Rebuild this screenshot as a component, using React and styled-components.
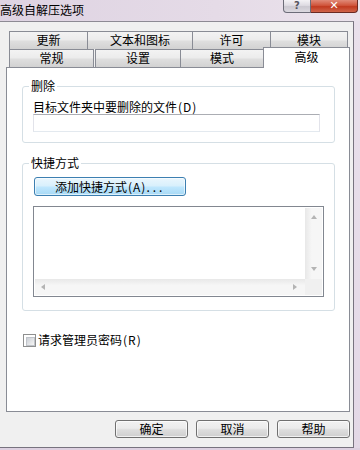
import React from 'react';
import styled, { createGlobalStyle } from 'styled-components';

const Global = createGlobalStyle`
  html, body {
    margin: 0;
    padding: 0;
    background: #e6dce8;
  }
  * {
    box-sizing: border-box;
  }
`;

const Window = styled.div`
  width: 360px;
  height: 450px;
  display: flex;
  flex-direction: column;
  font-family: "Noto Sans CJK SC", "DejaVu Sans", sans-serif;
  font-size: 12px;
  color: #000;
  background: #e6dce8;
  overflow: hidden;
`;

const TitleBar = styled.div`
  height: 21px;
  flex: 0 0 auto;
  display: flex;
  justify-content: space-between;
  align-items: flex-start;
  background: linear-gradient(90deg, #ded3e2 0%, #e5dbe7 60%, #ebe3ec 100%);
`;

const Title = styled.div`
  line-height: 20px;
  font-size: 12px;
`;

const Captions = styled.div`
  display: flex;
  margin-right: 2px;
`;

const CaptionButton = styled.div`
  height: 13px;
  width: ${p => p.$w}px;
  border: 1px solid ${p => (p.$close ? '#6b2a22' : '#6c6c78')};
  border-top: none;
  border-radius: ${p => (p.$close ? '0 0 4px 0' : '0 0 0 4px')};
  background: ${p =>
    p.$close
      ? 'linear-gradient(#e08a78 0%, #d0553c 45%, #c13a20 55%, #d0644a 100%)'
      : 'linear-gradient(#f4f2f5 0%, #dedbe2 45%, #cbc8d0 55%, #dcd9e0 100%)'};
  color: ${p => (p.$close ? '#fff' : '#55555e')};
  font-family: "DejaVu Sans", sans-serif;
  font-weight: bold;
  font-size: ${p => (p.$close ? 11 : 10)}px;
  line-height: 12px;
  text-align: center;
  & + & {
    border-left: none;
  }
`;

const Middle = styled.div`
  height: 427px;
  flex: 0 0 auto;
  display: flex;
`;

const Client = styled.div`
  width: 354px;
  background: #f0f0f0;
  border-top: 1px solid #8d8a94;
  border-right: 1px solid #77737f;
  border-bottom: 1px solid #77737f;
  padding: 9px 3px 0 6px;
  display: flex;
  flex-direction: column;
`;

const TabRow = styled.div`
  display: flex;
  align-items: flex-start;
  height: ${p => p.$h}px;
  margin-top: ${p => p.$mt || 0}px;
  padding-left: 3px;
  position: relative;
  z-index: ${p => p.$z || 0};
`;

const Tab = styled.div`
  width: ${p => p.$w}px;
  height: ${p => (p.$active ? 21 : 18)}px;
  margin-top: ${p => (p.$active ? 0 : p.$top || 0)}px;
  margin-left: ${p => (p.$ml === undefined ? -1 : p.$ml)}px;
  border: 1px solid #898c95;
  border-bottom: none;
  background: ${p =>
    p.$active
      ? '#fff'
      : 'linear-gradient(#f3f3f3 0%, #ececec 45%, #dedede 55%, #d2d2d2 100%)'};
  text-align: center;
  line-height: ${p => (p.$active ? 17 : 16)}px;
  position: relative;
  z-index: ${p => (p.$active ? 2 : 0)};
  &:first-child {
    margin-left: 0;
  }
`;

const Panel = styled.div`
  width: 344px;
  height: 345px;
  margin-top: -1px;
  background: #fff;
  border: 1px solid #898c95;
  padding: 11px 0 0 15px;
  display: flex;
  flex-direction: column;
  align-items: flex-start;
`;

const Group = styled.fieldset`
  width: 313px;
  margin: ${p => p.$mt || 0}px 0 0 0;
  padding: 0 10px ${p => p.$pb}px 10px;
  border: 1px solid #d5dfe5;
  border-radius: 3px;
  min-width: 0;
`;

const Legend = styled.legend`
  margin-left: -4px;
  padding: 0 2px;
  line-height: 14px;
`;

const Label = styled.div`
  line-height: 14px;
  margin-top: 7px;
`;

const Key = styled.span`
  letter-spacing: 1px;
  margin-left: 1px;
`;

const Dots = styled.span`
  letter-spacing: 3px;
`;

const TextBox = styled.div`
  width: 287px;
  height: 18px;
  border: 1px solid #abadb3;
  border-color: #abadb3 #e2e3ea #e3e9ef #e2e3ea;
  background: #fff;
`;

const BlueButton = styled.div`
  width: 152px;
  height: 19px;
  margin: 7px 0 0 1px;
  border: 1px solid #3c7fb1;
  border-radius: 3px;
  background: linear-gradient(#eaf6fd 0%, #d9f0fc 45%, #bee6fd 55%, #a7d9f5 100%);
  box-shadow: inset 0 0 0 1px rgba(255, 255, 255, 0.6);
  padding-left: 20px;
  line-height: 17px;
  white-space: nowrap;
`;

const ListBox = styled.div`
  width: 291px;
  height: 91px;
  margin-top: 10px;
  border: 1px solid #828790;
  background: #fff;
  padding: 1px;
  display: grid;
  grid-template-columns: 1fr 17px;
  grid-template-rows: 1fr 16px;
`;

const ScrollBar = styled.div`
  background: ${p =>
    p.$vertical
      ? 'linear-gradient(90deg, #e8e8e8, #f6f6f6 40%, #f6f6f6)'
      : 'linear-gradient(#e8e8e8, #f6f6f6 40%, #f6f6f6)'};
  display: flex;
  flex-direction: ${p => (p.$vertical ? 'column' : 'row')};
  justify-content: space-between;
  align-items: center;
  padding: ${p => (p.$vertical ? '7px 0 8px' : '0 8px 0 6px')};
  grid-column: ${p => (p.$vertical ? '2' : '1')};
  grid-row: ${p => (p.$vertical ? '1' : '2')};
`;

const Corner = styled.div`
  background: #f0f0f0;
  grid-column: 2;
  grid-row: 2;
`;

const Arrow = styled.div`
  width: 0;
  height: 0;
  border: 3.5px solid transparent;
  ${p => p.$dir === 'up' && 'border-bottom: 4px solid #b4b4b4; border-top-width: 0;'}
  ${p => p.$dir === 'down' && 'border-top: 4px solid #b4b4b4; border-bottom-width: 0;'}
  ${p => p.$dir === 'left' && 'border-right: 4px solid #b4b4b4; border-left-width: 0;'}
  ${p => p.$dir === 'right' && 'border-left: 4px solid #b4b4b4; border-right-width: 0;'}
`;

const CheckRow = styled.div`
  display: flex;
  align-items: center;
  margin: 22px 0 0 1px;
  line-height: 14px;
`;

const CheckBox = styled.div`
  width: 13px;
  height: 13px;
  border: 1px solid #8e8f8f;
  background: #fff;
  padding: 2px;
  margin-right: 2px;
  &::after {
    content: '';
    display: block;
    width: 100%;
    height: 100%;
    background: linear-gradient(135deg, #cbcfd5 0%, #f6f6f6 100%);
    border: 1px solid #c0c4ca;
  }
`;

const ButtonRow = styled.div`
  display: flex;
  justify-content: flex-end;
  gap: 8px;
  margin-top: 8px;
  width: 344px;
`;

const Button = styled.div`
  width: 73px;
  height: 18px;
  border: 1px solid #707070;
  border-radius: 3px;
  background: linear-gradient(#f2f2f2 0%, #ebebeb 45%, #dddddd 55%, #cfcfcf 100%);
  box-shadow: inset 0 0 0 1px rgba(255, 255, 255, 0.7);
  text-align: center;
  line-height: 16px;
`;

const RightFrame = styled.div`
  flex: 1;
  background: linear-gradient(#e9e0eb, #e3d8e6);
`;

const BottomFrame = styled.div`
  flex: 1;
  background: #ddd0e0;
`;

export default function App() {
  return (
    <>
      <Global />
      <Window>
        <TitleBar>
          <Title>高级自解压选项</Title>
          <Captions>
            <CaptionButton $w={28}>?</CaptionButton>
            <CaptionButton $w={47} $close>✕</CaptionButton>
          </Captions>
        </TitleBar>
        <Middle>
          <Client>
            <TabRow $h={18}>
              <Tab $w={79}>更新</Tab>
              <Tab $w={106}>文本和图标</Tab>
              <Tab $w={79}>许可</Tab>
              <Tab $w={78}>模块</Tab>
            </TabRow>
            <TabRow $h={21} $mt={-2} $z={1}>
              <Tab $w={85} $top={2}>常规</Tab>
              <Tab $w={86} $top={2} $ml={1}>设置</Tab>
              <Tab $w={84} $top={2}>模式</Tab>
              <Tab $w={87} $active>高级</Tab>
            </TabRow>
            <Panel>
              <Group $pb={10}>
                <Legend>删除</Legend>
                <Label>目标文件夹中要删除的文件<Key>(D)</Key></Label>
                <TextBox />
              </Group>
              <Group $mt={13} $pb={13}>
                <Legend>快捷方式</Legend>
                <BlueButton>添加快捷方式<Key>(A)</Key><Dots>...</Dots></BlueButton>
                <ListBox>
                  <div />
                  <ScrollBar $vertical>
                    <Arrow $dir="up" />
                    <Arrow $dir="down" />
                  </ScrollBar>
                  <ScrollBar>
                    <Arrow $dir="left" />
                    <Arrow $dir="right" />
                  </ScrollBar>
                  <Corner />
                </ListBox>
              </Group>
              <CheckRow>
                <CheckBox />
                请求管理员密码<Key>(R)</Key>
              </CheckRow>
            </Panel>
            <ButtonRow>
              <Button>确定</Button>
              <Button>取消</Button>
              <Button>帮助</Button>
            </ButtonRow>
          </Client>
          <RightFrame />
        </Middle>
        <BottomFrame />
      </Window>
    </>
  );
}
